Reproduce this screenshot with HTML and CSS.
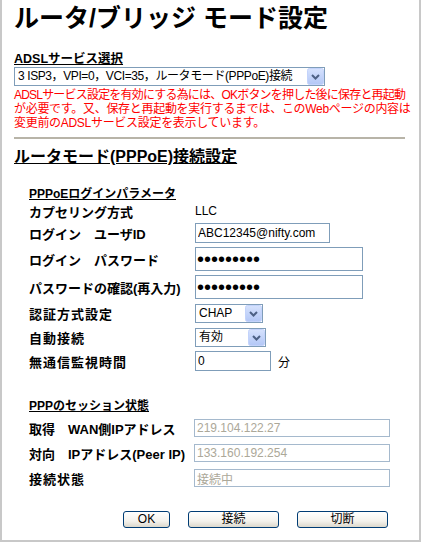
FILE: index.html
```html
<!DOCTYPE html>
<html lang="ja">
<head>
<meta charset="utf-8">
<title>ルータ/ブリッジ モード設定</title>
<link rel="stylesheet" href="styles.css">
</head>
<body>
<div class="page">
  <h1 class="title">ルータ/ブリッジ モード設定</h1>

  <h2 class="sub">ADSLサービス選択</h2>
  <span class="sel sel-service">
    <select>
      <option>3 ISP3，VPI=0，VCI=35，ルータモード(PPPoE)接続</option>
    </select>
    <span class="arrow"><svg width="17" height="17" viewBox="0 0 17 17"><defs><linearGradient id="g1" x1="0" y1="0" x2="0" y2="1"><stop offset="0" stop-color="#d6e2fd"/><stop offset="1" stop-color="#b3c7f6"/></linearGradient></defs><rect x="0.5" y="0.5" width="16" height="16" rx="2" fill="url(#g1)" stroke="#c3d3fb"/><path d="M5 7 L8.5 10.5 L12 7" fill="none" stroke="#4d6185" stroke-width="2"/></svg></span>
  </span>
  <p class="notice"><span class="tight">ADSLサービス設定を有効にする為には、OKボタンを押した後に保存と再起動</span><br>が必要です。又、保存と再起動を実行するまでは、このWebページの内容は<br>変更前のADSLサービス設定を表示しています。</p>
  <hr class="rule">

  <h2 class="section">ルータモード(PPPoE)接続設定</h2>

  <div class="group">
    <h3 class="group-title">PPPoEログインパラメータ</h3>
    <div class="form">
      <div class="label r1">カプセリング方式</div>
      <div class="value r1">LLC</div>

      <div class="label r2">ログイン　ユーザID</div>
      <div class="value r2"><input class="txt w135" type="text" value="ABC12345@nifty.com"></div>

      <div class="label r3">ログイン　パスワード</div>
      <div class="value r3"><input class="txt pw" type="password" value="abcdefghi"></div>

      <div class="label r3">パスワードの確認(再入力)</div>
      <div class="value r3"><input class="txt pw" type="password" value="abcdefghi"></div>

      <div class="label wide r2">認証方式設定</div>
      <div class="value r2">
        <span class="sel sel-chap">
          <select><option>CHAP</option></select>
          <span class="arrow"><svg width="17" height="17" viewBox="0 0 17 17"><defs><linearGradient id="g2" x1="0" y1="0" x2="0" y2="1"><stop offset="0" stop-color="#d6e2fd"/><stop offset="1" stop-color="#b3c7f6"/></linearGradient></defs><rect x="0.5" y="0.5" width="16" height="16" rx="2" fill="url(#g2)" stroke="#c3d3fb"/><path d="M5 7 L8.5 10.5 L12 7" fill="none" stroke="#4d6185" stroke-width="2"/></svg></span>
        </span>
      </div>

      <div class="label wide r2">自動接続</div>
      <div class="value r2">
        <span class="sel sel-auto">
          <select><option>有効</option></select>
          <span class="arrow"><svg width="17" height="17" viewBox="0 0 17 17"><defs><linearGradient id="g3" x1="0" y1="0" x2="0" y2="1"><stop offset="0" stop-color="#d6e2fd"/><stop offset="1" stop-color="#b3c7f6"/></linearGradient></defs><rect x="0.5" y="0.5" width="16" height="16" rx="2" fill="url(#g3)" stroke="#c3d3fb"/><path d="M5 7 L8.5 10.5 L12 7" fill="none" stroke="#4d6185" stroke-width="2"/></svg></span>
        </span>
      </div>

      <div class="label wide r2">無通信監視時間</div>
      <div class="value r2"><input class="txt w76" type="text" value="0"><span class="unit">分</span></div>
    </div>
  </div>

  <div class="group group-ppp">
    <h3 class="group-title">PPPのセッション状態</h3>
    <div class="form form-ppp">
      <div class="label">取得　WAN側IPアドレス</div>
      <div class="value"><input class="txt ro" type="text" value="219.104.122.27" disabled></div>

      <div class="label">対向　IPアドレス(Peer IP)</div>
      <div class="value"><input class="txt ro" type="text" value="133.160.192.254" disabled></div>

      <div class="label wide">接続状態</div>
      <div class="value"><input class="txt ro" type="text" value="接続中" disabled></div>
    </div>
  </div>

  <div class="buttons">
    <button class="btn btn-ok" type="button">OK</button>
    <button class="btn btn-wide" type="button">接続</button>
    <button class="btn btn-wide" type="button">切断</button>
  </div>
</div>
</body>
</html>
```

FILE: styles.css
```css
html, body {
  margin: 0;
  padding: 0;
  height: 100%;
}

body {
  box-sizing: border-box;
  border-left: 2px solid #c8c8c8;
  border-right: 2px solid #c8c8c8;
  border-bottom: 2px solid #c8c8c8;
  background: #ffffff;
  color: #000000;
  font-family: "Liberation Sans", "Noto Sans CJK JP", sans-serif;
  font-size: 12px;
  overflow: hidden;
}

.page {
  padding: 0 12px 0 12px;
}

.title {
  margin: 0;
  padding-top: 3px;
  font-size: 25px;
  line-height: 30px;
  font-weight: bold;
  letter-spacing: 0;
}

.sub {
  margin: 19px 0 0 0;
  font-size: 12.5px;
  line-height: 15px;
  font-weight: bold;
  text-decoration: underline;
}

.sel {
  position: relative;
  display: inline-block;
  vertical-align: middle;
}

.sel select {
  appearance: none;
  -webkit-appearance: none;
  box-sizing: border-box;
  height: 19px;
  margin: 0;
  padding: 0 20px 0 3px;
  border: 1px solid #7f9db9;
  border-radius: 0;
  background: #ffffff;
  color: #000000;
  font-family: "Liberation Sans", "Noto Sans CJK JP", sans-serif;
  font-size: 12px;
  line-height: 17px;
}

.sel .arrow {
  position: absolute;
  right: 1px;
  top: 1px;
  width: 17px;
  height: 17px;
  pointer-events: none;
}

.sel .arrow svg {
  display: block;
}

.sel-service {
  margin-top: 0;
}

.sel-service select {
  width: 311px;
  letter-spacing: -0.4px;
}

.sel-chap select {
  width: 68px;
}

.sel-auto select {
  width: 71px;
}

.notice {
  margin: 2px 0 0 0;
  color: #ff0000;
  font-size: 12px;
  line-height: 14px;
  white-space: nowrap;
  letter-spacing: -0.3px;
}

.tight {
  letter-spacing: -0.8px;
}

.rule {
  margin: 7px 2px 0 0;
  border: 0;
  border-top: 2px solid #b8b4a8;
  height: 0;
}

.section {
  margin: 8px 0 0 0;
  font-size: 16px;
  line-height: 20px;
  font-weight: bold;
  text-decoration: underline;
}

.group {
  padding-left: 15px;
  margin-top: 20px;
}

.group-title {
  margin: 0;
  font-size: 12px;
  line-height: 14px;
  font-weight: bold;
  text-decoration: underline;
}

.form {
  display: grid;
  grid-template-columns: 166px auto;
  row-gap: 4px;
  margin-top: 2px;
}

.label {
  display: flex;
  align-items: center;
  font-size: 13px;
  font-weight: bold;
  white-space: nowrap;
}

.label.wide {
  letter-spacing: 1px;
}

.value {
  display: flex;
  align-items: center;
}

.r1 { height: 16px; }
.r2 { height: 20px; }
.r3 { height: 24px; }

.txt {
  box-sizing: border-box;
  margin: 0;
  padding: 0 2px;
  border: 1px solid #7f9db9;
  border-radius: 0;
  background: #ffffff;
  color: #000000;
  font-family: "Liberation Sans", "Noto Sans CJK JP", sans-serif;
  font-size: 12px;
  outline: none;
}

.w135 {
  width: 135px;
  height: 20px;
}

.pw {
  width: 168px;
  height: 24px;
  font-size: 20px;
  padding: 0 1px;
  letter-spacing: 0;
}

.w76 {
  width: 76px;
  height: 20px;
}

.unit {
  margin-left: 7px;
}

.group-ppp {
  margin-top: 28px;
}

.form-ppp {
  grid-template-columns: 165px auto;
  row-gap: 7px;
  margin-top: 6px;
}

.form-ppp .label,
.form-ppp .value {
  height: 18px;
}

.ro {
  width: 196px;
  height: 18px;
  color: #aca899;
  background: #ffffff;
  border-color: #a5b9cd;
}

.ro:disabled {
  color: #aca899;
  background: #ffffff;
}

.buttons {
  display: flex;
  gap: 18px;
  padding-left: 109px;
  margin-top: 24px;
}

.btn {
  box-sizing: border-box;
  height: 17px;
  margin: 0;
  padding: 0;
  border: 1px solid #003c74;
  border-radius: 3px;
  background: linear-gradient(#ffffff 0%, #f4f2ec 60%, #dcd8cc 100%);
  color: #000000;
  font-family: "Liberation Sans", "Noto Sans CJK JP", sans-serif;
  font-size: 12px;
  line-height: 15px;
}

.btn-ok {
  width: 47px;
}

.btn-wide {
  width: 91px;
}
```
